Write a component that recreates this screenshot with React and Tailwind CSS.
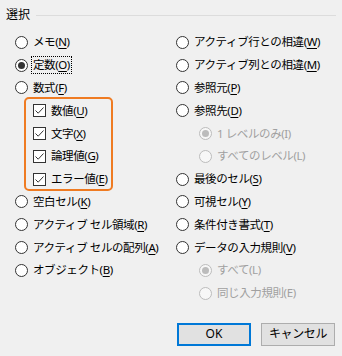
import React from "react";

const Key = ({ children }) => (
  <span className="underline underline-offset-[2px] decoration-1">{children}</span>
);

const Radio = ({ checked, disabled }) => (
  <span
    className={
      "flex h-[13px] w-[13px] shrink-0 items-center justify-center rounded-full border " +
      (disabled ? "border-[#bcbcbc] bg-[#f7f7f7]" : "border-[#333333] bg-white")
    }
  >
    {checked && (
      <span
        className={
          "h-[7px] w-[7px] rounded-full " + (disabled ? "bg-[#bcbcbc]" : "bg-[#333333]")
        }
      />
    )}
  </span>
);

const Check = () => (
  <span className="flex h-[13px] w-[13px] shrink-0 items-center justify-center border border-[#333333] bg-white">
    <svg width="11" height="11" viewBox="0 0 11 11" fill="none">
      <path d="M1.5 5.5 L4.2 8.2 L9.5 2.5" stroke="#333333" strokeWidth="1" />
    </svg>
  </span>
);

const Row = ({ label, k, checked, disabled, sub, box, focus }) => (
  <div className={"flex h-[22.8px] items-center " + (sub ? "pl-[23px]" : box ? "pl-[18px]" : "")}>
    {box ? <Check /> : <Radio checked={checked} disabled={disabled} />}
    <span
      className={
        "ml-[4px] whitespace-nowrap px-[1px] text-[11.5px] leading-[16px] tracking-[-0.4px] " +
        (disabled ? "text-[#a0a0a0]" : "text-black") +
        (focus ? " outline outline-1 outline-dotted outline-black" : "")
      }
    >
      {label}
      {k ? (
        <>
          (<Key>{k}</Key>)
        </>
      ) : null}
    </span>
  </div>
);

export default function App() {
  return (
    <div
      className="flex h-[356px] w-[342px] flex-col bg-[#f0f0f0]"
      style={{ fontFamily: "'Noto Sans', 'Noto Sans CJK JP', sans-serif" }}
    >
      <div className="flex h-[31px] items-start pl-[6px] pr-[6px] pt-[7px]">
        <span className="text-[12px] leading-[16px] text-black">選択</span>
        <div className="ml-[6px] mt-[8px] h-px flex-1 bg-[#dcdcdc]" />
      </div>
      <div className="grid grid-cols-[161px_1fr] pl-[15px]">
        <div className="flex flex-col">
          <Row label="メモ" k="N" />
          <Row label="定数" k="O" checked focus />
          <Row label="数式" k="F" />
          <div className="relative">
            <Row label="数値" k="U" box />
            <Row label="文字" k="X" box />
            <Row label="論理値" k="G" box />
            <Row label="エラー値" k="E" box />
            <div className="pointer-events-none absolute bottom-0 left-[9px] right-[63px] top-[-2px] rounded-[5px] border-2 border-[#ef7b22]" />
          </div>
          <Row label="空白セル" k="K" />
          <Row label="アクティブ セル領域" k="R" />
          <Row label="アクティブ セルの配列" k="A" />
          <Row label="オブジェクト" k="B" />
        </div>
        <div className="flex flex-col">
          <Row label="アクティブ行との相違" k="W" />
          <Row label="アクティブ列との相違" k="M" />
          <Row label="参照元" k="P" />
          <Row label="参照先" k="D" />
          <Row label="1 レベルのみ(I)" sub disabled checked />
          <Row label="すべてのレベル(L)" sub disabled />
          <Row label="最後のセル" k="S" />
          <Row label="可視セル" k="Y" />
          <Row label="条件付き書式" k="T" />
          <Row label="データの入力規則" k="V" />
          <Row label="すべて(L)" sub disabled checked />
          <Row label="同じ入力規則(E)" sub disabled />
        </div>
      </div>
      <div className="mt-[18px] flex justify-end gap-[10px] pr-[7px]">
        <button className="h-[23px] w-[74px] border-2 border-[#0078d7] bg-[#e1e1e1] text-[12px] leading-[16px] text-black">
          OK
        </button>
        <button className="h-[23px] w-[74px] border border-[#adadad] bg-[#e1e1e1] text-[12px] leading-[16px] tracking-[-0.4px] text-black">
          キャンセル
        </button>
      </div>
    </div>
  );
}
